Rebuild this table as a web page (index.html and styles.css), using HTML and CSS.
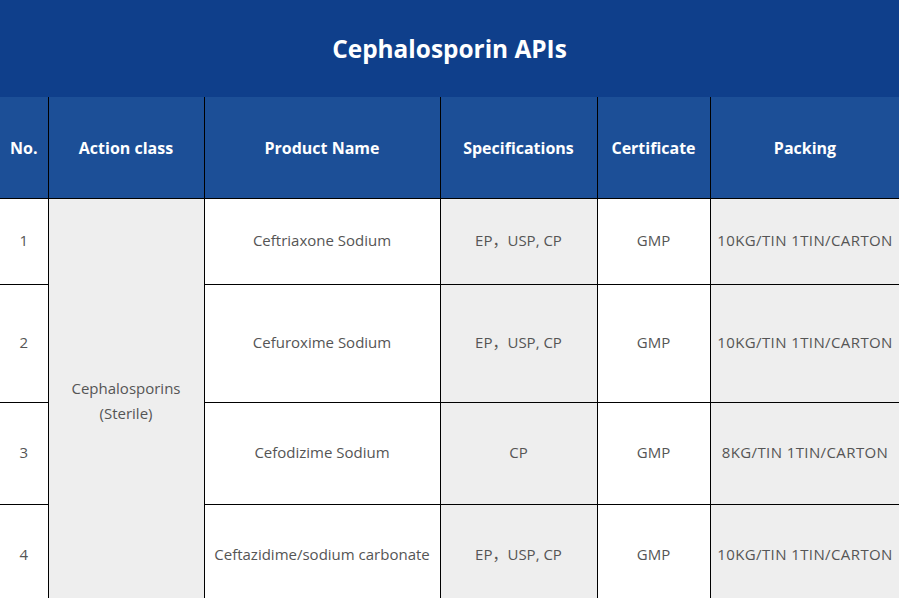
FILE: index.html
```html
<!DOCTYPE html>
<html lang="en">
<head>
<meta charset="utf-8">
<title>Cephalosporin APIs</title>
<link rel="stylesheet" href="styles.css">
</head>
<body>
<div class="page">
  <h1 class="title">Cephalosporin APIs</h1>
  <table class="grid">
    <colgroup>
      <col class="c-no">
      <col class="c-class">
      <col class="c-name">
      <col class="c-spec">
      <col class="c-cert">
      <col class="c-pack">
    </colgroup>
    <thead>
      <tr class="head">
        <th>No.</th>
        <th>Action class</th>
        <th>Product Name</th>
        <th>Specifications</th>
        <th>Certificate</th>
        <th>Packing</th>
      </tr>
    </thead>
    <tbody>
      <tr class="r1">
        <td>1</td>
        <td class="grey" rowspan="4">Cephalosporins<br>(Sterile)</td>
        <td>Ceftriaxone Sodium</td>
        <td class="grey">EP，USP, CP</td>
        <td>GMP</td>
        <td class="grey pack">10KG/TIN 1TIN/CARTON</td>
      </tr>
      <tr class="r2">
        <td>2</td>
        <td>Cefuroxime Sodium</td>
        <td class="grey">EP，USP, CP</td>
        <td>GMP</td>
        <td class="grey pack">10KG/TIN 1TIN/CARTON</td>
      </tr>
      <tr class="r3">
        <td>3</td>
        <td>Cefodizime Sodium</td>
        <td class="grey">CP</td>
        <td>GMP</td>
        <td class="grey pack">8KG/TIN 1TIN/CARTON</td>
      </tr>
      <tr class="r4">
        <td>4</td>
        <td>Ceftazidime/sodium carbonate</td>
        <td class="grey">EP，USP, CP</td>
        <td>GMP</td>
        <td class="grey pack">10KG/TIN 1TIN/CARTON</td>
      </tr>
    </tbody>
  </table>
</div>
</body>
</html>
```

FILE: styles.css
```css
html, body {
  margin: 0;
  padding: 0;
  background: #ffffff;
}
body {
  font-family: "Open Sans", "Noto Sans CJK SC", "Noto Sans", sans-serif;
  overflow: hidden;
}
.page {
  width: 899px;
}
.title {
  margin: 0;
  height: 97px;
  display: flex;
  align-items: center;
  justify-content: center;
  background: #0f3f8b;
  color: #ffffff;
  font-size: 24.4px;
  font-weight: 700;
}
.grid {
  width: 900px;
  border-collapse: collapse;
  table-layout: fixed;
}
.c-no { width: 48px; }
.c-class { width: 156px; }
.c-name { width: 236px; }
.c-spec { width: 157px; }
.c-cert { width: 113px; }
.c-pack { width: 190px; }
.grid th, .grid td {
  border: 1px solid #000000;
  text-align: center;
  vertical-align: middle;
  padding: 0;
}
.grid tr > :first-child { border-left: none; }
.grid thead tr:first-child th { border-top: none; }
.head th {
  height: 101px;
  background: #1c4f97;
  color: #ffffff;
  font-size: 16px;
  font-weight: 700;
}
.grid td {
  color: #555555;
  font-size: 15px;
  line-height: 25px;
  padding-bottom: 3px;
}
.grid td.grey {
  background: #eeeeee;
}
.grid td.pack {
  letter-spacing: 0.4px;
}
.r1 td { height: 82px; }
.r2 td { height: 114px; }
.r3 td { height: 98px; }
.r4 td { height: 98px; }
```
